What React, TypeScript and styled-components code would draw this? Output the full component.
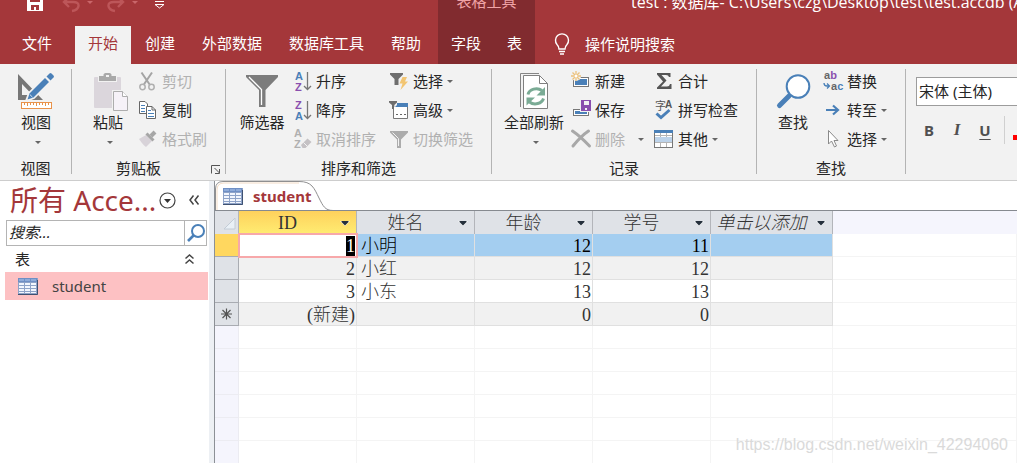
import React from 'react';
import styled, { createGlobalStyle, css } from 'styled-components';

const BLUE = '#4a80b8';
const PURPLE = '#8a4fae';
const FAINT = '#b0b0b0';
const BRAND = '#a4373a';

const uiFont = '"Noto Sans", "Noto Sans CJK SC", sans-serif';
const sheetFont = '"Liberation Serif", "Noto Sans CJK SC", serif';

const GlobalStyle = createGlobalStyle`
  *, *::before, *::after { box-sizing: border-box; }
  body { margin: 0; font: 15px/20px ${uiFont}; color: #262626; background: #fff; }
  button, input, select { font: inherit; color: inherit; margin: 0; padding: 0; border: 0; background: none; }
  svg { display: block; flex: none; overflow: visible; }
  h1, h2 { margin: 0; font: inherit; }
`;

const Window = styled.div`
  display: flex;
  flex-direction: column;
  height: 100vh;
  overflow: hidden;
`;

/* ---------- title bar and tabs ---------- */

const TitleBar = styled.header`
  display: flex;
  height: 26px;
  flex: none;
  overflow: hidden;
  background: ${BRAND};
  color: #fff;
  white-space: nowrap;
`;

const QuickAccess = styled.div`
  display: flex;
  align-items: flex-start;
  width: 438px;
  flex: none;
  padding-left: 26px;
`;

const QuickButton = styled.button<{ $gap?: number }>`
  display: flex;
  margin-right: ${(p) => p.$gap ?? 0}px;
`;

const ContextTitle = styled.div`
  width: 97px;
  flex: none;
  background: #812b2f;
  color: #f0a3a6;
  text-align: center;
  line-height: 2px;
`;

const WindowTitle = styled.h1`
  margin-left: 96px;
  font: 16px/4px "Open Sans", "Noto Sans CJK SC", sans-serif;
`;

const TabBar = styled.nav`
  display: flex;
  height: 38px;
  flex: none;
  background: ${BRAND};
  color: #fff;
  white-space: nowrap;
`;

const MainTabs = styled.div`
  display: flex;
  gap: 1px;
  width: 438px;
  flex: none;
`;

const Tab = styled.button<{ $active?: boolean; $file?: boolean }>`
  padding: 0 13px 4px;
  ${(p) => p.$file && css`width: 74px; padding: 0 0 4px;`}
  ${(p) => p.$active && css`background: #f2f2f2; color: ${BRAND};`}
`;

const ContextTabs = styled.div`
  display: flex;
  width: 97px;
  flex: none;
  background: #812b2f;
`;

const TellMe = styled.button`
  display: flex;
  align-items: center;
  gap: 15px;
  padding: 0 19px 2px;
`;

/* ---------- ribbon ---------- */

const Ribbon = styled.div`
  display: flex;
  height: 117px;
  flex: none;
  background: #f2f2f2;
  border-bottom: 1px solid #cdcdcd;
  white-space: nowrap;
  overflow: hidden;
`;

const Group = styled.section<{ $width?: number }>`
  display: flex;
  flex-direction: column;
  padding-top: 2px;
  ${(p) => (p.$width ? css`width: ${p.$width}px; flex: none;` : css`flex: 1;`)}
`;

const Divider = styled.div`
  width: 1px;
  flex: none;
  margin: 5px 0 6px;
  background: #b4b4b4;
`;

const GroupBody = styled.div<{ $indent: number }>`
  display: flex;
  align-items: flex-start;
  height: 88px;
  flex: none;
  padding-left: ${(p) => p.$indent}px;
`;

const GroupLabel = styled.h2<{ $end?: boolean }>`
  display: flex;
  justify-content: ${(p) => (p.$end ? 'flex-end' : 'center')};
  padding: 4px ${(p) => (p.$end ? 4 : 0)}px 0 0;
  line-height: 20px;
`;

const Launcher = styled.button`
  align-self: center;
  margin: 2px 0 0 50px;
`;

const BigButton = styled.button<{ $width: number }>`
  display: flex;
  flex-direction: column;
  align-items: center;
  width: ${(p) => p.$width}px;
  flex: none;
  padding-top: 4px;
  line-height: 20px;
`;

const BigCaret = styled.span`
  margin: 9px 0 0 4px;
`;

const Column = styled.div<{ $gap: number }>`
  display: flex;
  flex-direction: column;
  align-items: flex-start;
  margin-left: ${(p) => p.$gap}px;
`;

const SmallButton = styled.button<{ $off?: boolean }>`
  display: flex;
  align-items: center;
  gap: 4px;
  height: 29px;
  ${(p) => p.$off && css`color: #b1b1b1;`}
`;

const CaretSlot = styled.span<{ $far?: boolean }>`
  margin: 2px 0 0 ${(p) => (p.$far ? 9 : 0)}px;
`;

const FontGroup = styled(Group)`
  padding: 13px 0 0 10px;
  min-width: 0;
`;

const FontSelect = styled.select`
  appearance: none;
  height: 29px;
  padding: 0 0 2px 2px;
  border: 1px solid #9c9c9c;
  border-right: 0;
  border-radius: 0;
  background: #fff;
`;

const FormatRow = styled.div`
  display: flex;
  align-items: center;
  height: 28px;
  margin-top: 10px;
`;

const FormatButton = styled.button<{ $kind: 'b' | 'i' | 'u' }>`
  width: 28px;
  flex: none;
  padding-right: 2px;
  color: #505050;
  font-weight: 700;
  ${(p) => p.$kind === 'i' && css`font-family: "Liberation Serif", serif; font-size: 17px; font-style: italic;`}
  ${(p) => p.$kind === 'u' && css`text-decoration: underline; text-underline-offset: 3px;`}
`;

const FormatDivider = styled.div`
  width: 1px;
  height: 28px;
  margin: 0 8px 0 4px;
  flex: none;
  background: #d0d0d0;
`;

const FontColor = styled.button`
  width: 16px;
  height: 5px;
  margin-top: 14px;
  flex: none;
  background: #f00;
`;

/* ---------- navigation pane ---------- */

const Workspace = styled.div`
  display: flex;
  flex: 1;
  min-height: 0;
`;

const NavPane = styled.aside`
  width: 209px;
  flex: none;
  padding: 0 1px 0 5px;
`;

const NavHeader = styled.div`
  display: flex;
  align-items: center;
  height: 38px;
  padding: 0 9px 0 5px;
`;

const NavTitle = styled.h2`
  flex: 1;
  color: ${BRAND};
  font-size: 28px;
  line-height: 36px;
  white-space: nowrap;
`;

const NavCollapse = styled.button`
  margin: 0 0 0 13px;
`;

const SearchBox = styled.form`
  display: flex;
  height: 26px;
  margin: 1px 1px 0;
  border: 1px solid #b4b4b4;
`;

const SearchInput = styled.input`
  flex: 1;
  min-width: 0;
  padding: 0 0 2px 2px;
  font-style: italic;
  &::placeholder { color: #262626; opacity: 1; }
`;

const SearchButton = styled.button`
  display: flex;
  align-items: center;
  justify-content: center;
  width: 22px;
  border-left: 1px solid #b4b4b4;
`;

const NavSection = styled.button`
  display: flex;
  align-items: center;
  justify-content: space-between;
  width: 100%;
  height: 26px;
  padding: 0 14px 0 10px;
`;

const NavItem = styled.a`
  display: flex;
  align-items: center;
  gap: 14px;
  height: 28px;
  padding-left: 13px;
  background: #fdc1c3;
  color: #444;
  text-decoration: none;
`;

const Splitter = styled.div`
  width: 6px;
  flex: none;
  background: #edf0f4;
  border-right: 1px solid #8c9096;
`;

/* ---------- datasheet ---------- */

const Document = styled.main`
  position: relative;
  display: flex;
  flex-direction: column;
  flex: 1;
  min-width: 0;
  overflow: hidden;
`;

const DocTabs = styled.div`
  height: 30px;
  flex: none;
  border-bottom: 1px solid #868a90;
`;

const DocTab = styled.button`
  position: relative;
  display: flex;
  align-items: center;
  gap: 10px;
  width: 118px;
  height: 30px;
  padding-left: 8px;
  color: ${BRAND};
  font-weight: 700;
`;

const TabShape = styled.svg`
  position: absolute;
  inset: 0;
  z-index: -1;
`;

const Sheet = styled.table`
  width: 100%;
  table-layout: fixed;
  border-collapse: separate;
  border-spacing: 0;
  font: 18px/20px ${sheetFont};
  color: #333;
`;

const HeadCell = styled.th<{ $tone?: 'active' | 'rest' }>`
  height: 23px;
  padding: 0;
  border-right: 1px solid #b3b5ba;
  background: #dfe2e7;
  font-weight: 300;
  ${(p) => p.$tone === 'active' && css`background: linear-gradient(#fed15c, #ffec72);`}
  ${(p) => p.$tone === 'rest' && css`background: #f5f5fd; border-color: #f5f5fd;`}
`;

const HeadInner = styled.div<{ $italic?: boolean }>`
  display: flex;
  align-items: center;
  justify-content: center;
  padding: 0 6px 0 0;
  font-style: ${(p) => (p.$italic ? 'italic' : 'normal')};
`;

const HeadText = styled.span`
  flex: 1;
  padding-right: 4px;
  text-align: center;
  white-space: nowrap;
`;

const HeadButton = styled.button`
  padding-top: 2px;
`;

const RowHead = styled.th<{ $tone?: 'active' | 'empty' }>`
  height: 23px;
  padding: 0 0 0 5px;
  border-right: 1px solid #a9acb2;
  border-bottom: 1px solid #a9acb2;
  background: #dfe2e7;
  ${(p) => p.$tone === 'active' && css`background: #ffd75f;`}
  ${(p) => p.$tone === 'empty' && css`background: #f5f5fd; border-color: #ececf2;`}
`;

const Cell = styled.td<{ $tone?: 'selected' | 'alt' | 'empty'; $left?: boolean }>`
  height: 23px;
  padding: 2px 1px 0 4px;
  border-right: 1px solid #e0e0e0;
  border-bottom: 1px solid #e0e0e0;
  font-weight: 300;
  text-align: ${(p) => (p.$left ? 'left' : 'right')};
  ${(p) => p.$tone === 'alt' && css`background: #f1f1f1;`}
  ${(p) => p.$tone === 'selected' && css`background: #a4cef0; color: #000;`}
  ${(p) => p.$tone === 'empty' && css`border-color: #f4f4f4;`}
`;

const EditCell = styled(Cell)`
  outline: 2px solid #f7a8aa;
  outline-offset: -1px;
`;

const Selection = styled.span`
  display: block;
  width: 9px;
  margin-left: auto;
  background: #000;
  color: #fff;
`;

const Watermark = styled.div`
  position: absolute;
  right: 9px;
  bottom: 8px;
  font: 16px/20px "Liberation Sans", sans-serif;
  color: #dadada;
`;

/* ---------- icons ---------- */

const Caret = ({ color = '#666' }: { color?: string }) => (
  <svg width="6" height="3" viewBox="0 0 6 3"><path d="M0 0H6L3 3Z" fill={color} /></svg>
);

const Small = ({ children }: { children: React.ReactNode }) => (
  <svg width="20" height="20" viewBox="0 0 20 20" fill="none">{children}</svg>
);

const Big = ({ children }: { children: React.ReactNode }) => (
  <svg width="40" height="42" viewBox="0 0 40 42" fill="none">{children}</svg>
);

const ViewIcon = () => (
  <Big>
    <path d="M2 4V30H27ZM6 14V25H16.500Z" fill="#777" fillRule="evenodd" />
    <path d="M10 31L13 23L31 5L36 10L18 28Z" fill="#f2f2f2" stroke="#f2f2f2" strokeWidth="2" />
    <path d="M11.500 29.500L13.500 23.500L29 8L33 12L17.500 27.500Z" fill={BLUE} />
    <path d="M30.500 6.500L33.500 3.500Q34.500 2.500 35.500 3.500L37.500 5.500Q38.500 6.500 37.500 7.500L34.500 10.500Z" fill={BLUE} />
    <path d="M13.800 24.500L16.500 27.200" stroke="#d8e6f4" />
    <rect x="5.500" y="32.500" width="30" height="6" fill="#fff" stroke="#e8924a" />
    <path d="M8.500 33v2M11.500 33v3M14.500 33v2M17.500 33v2M20.500 33v3M23.500 33v2M26.500 33v2M29.500 33v3M32.500 33v2" stroke="#e8924a" />
  </Big>
);

const PasteIcon = () => (
  <Big>
    <rect x="6" y="7" width="27" height="31" rx="1" fill="#dbd6dc" />
    <path d="M10 12V5H15Q16 2 19.500 2T24 5H29V12Z" fill="#f2f2f2" />
    <path d="M11 11V6H15.500V4.500Q16 3 17.500 3H21.500Q23 3 23.500 4.500V6H28V11Z" fill="#a9a9a9" />
    <rect x="18" y="5" width="3" height="2" fill="#f2f2f2" />
    <path d="M24 20H36L41 26V42H24Z" fill="#f2f2f2" />
    <path d="M25.500 21.500H34.500L39.500 26.500V40.500H25.500Z" fill="#f6f2f8" stroke="#adadad" />
    <path d="M34.500 21.500V26.500H39.500" fill="#fff" stroke="#adadad" />
  </Big>
);

const FilterIcon = () => (
  <Big>
    <path d="M4 5H36V7L23.500 20V37H17V20L4 7Z" fill="#7c7c7c" />
    <path d="M7 7L19.500 19.500V35" stroke="#fff" strokeWidth="1.300" />
  </Big>
);

const RefreshIcon = () => (
  <Big>
    <path d="M6.500 37V3.500H25" stroke="#858585" />
    <path d="M9.500 5.500H25.500L33.500 13.500V38.500H9.500Z" fill="#fff" stroke="#808080" />
    <path d="M25.500 5.500V13.500H33.500" stroke="#808080" />
    <path d="M14 24.500A8.500 7 0 0 1 28 20.500M29.500 28.500A8.500 7 0 0 1 15.500 32" stroke="#7aab95" strokeWidth="3" />
    <path d="M31 17V25.500H22.500ZM12.500 35.500V27.500H21Z" fill="#7aab95" />
  </Big>
);

const FindIcon = () => (
  <Big>
    <path d="M16 26L6.500 35.500" stroke={BLUE} strokeWidth="5" strokeLinecap="round" />
    <circle cx="25" cy="16.500" r="11.300" fill="#fff" stroke={BLUE} strokeWidth="2" />
  </Big>
);

const CutIcon = () => (
  <Small>
    <path d="M3.500 1.500L12 14M14 1.500L5.500 14" stroke="#a4a4a4" strokeWidth="2" />
    <circle cx="4.500" cy="16" r="2.700" stroke={FAINT} strokeWidth="1.500" />
    <circle cx="13.500" cy="16" r="2.700" stroke={FAINT} strokeWidth="1.500" />
  </Small>
);

const CopyIcon = () => (
  <Small>
    <path d="M1.500 1.500H7L9.500 4V13.500H1.500Z" fill="#fff" stroke="#666" />
    <path d="M3 5.500h4M3 8.500h4M3 11.500h4" stroke={BLUE} />
    <path d="M8.500 6.500H14L17.500 10V18.500H8.500Z" fill="#fff" stroke="#666" />
    <path d="M14 6.500V10H17.500" stroke="#666" />
    <path d="M10 10.500h3M10 13.500h6M10 16.500h6" stroke={BLUE} />
  </Small>
);

const BrushIcon = () => (
  <Small>
    <path d="M1 10L8 6L14 12L8 18Q5 16 1 10Z" fill="#d8d3d9" />
    <path d="M8.500 4.500L15.500 11.500" stroke="#a6a6a6" strokeWidth="3" />
    <path d="M13 7L17 3" stroke="#a6a6a6" strokeWidth="4" />
  </Small>
);

const LetterText = styled.text`
  font: 700 11px "Liberation Sans", sans-serif;
`;

const SortIcon = ({ top, bottom, a, b }: { top: string; bottom: string; a: string; b: string }) => (
  <Small>
    <LetterText x="3" y="9" fill={a}>{top}</LetterText>
    <LetterText x="3" y="20" fill={b}>{bottom}</LetterText>
    <path d="M15.500 1V18.500M12 15L15.500 18.500L19 15" stroke="#777" strokeWidth="1.300" />
  </Small>
);

const ClearSortIcon = () => (
  <Small>
    <LetterText x="2" y="8" fill="#b0b0b0">A</LetterText>
    <LetterText x="2" y="19" fill="#b0b0b0">Z</LetterText>
    <path d="M9 16L15.500 9.500L19.500 13L13.500 19H10.500Z" fill="#c4c1c4" />
    <path d="M11.500 13.500L15.500 17.500" stroke="#f2f2f2" />
  </Small>
);

const SelectionIcon = () => (
  <Small>
    <path d="M1 2H14V3.500L9.500 8V14H5.500V8L1 3.500Z" fill="#6e6e6e" />
    <path d="M13.500 6H18L16 10.500H19L11.500 19L13.500 12.500H10.500Z" fill="#f2c572" />
  </Small>
);

const AdvancedIcon = () => (
  <Small>
    <path d="M0 1H8V2.500L5.300 5V9H3V5L0 2.500Z" fill="#6e6e6e" />
    <path d="M4.500 9V18.500H18.500V6" fill="#fff" stroke="#777" />
    <path d="M8 3H19V7H6L8 5Z" fill={BLUE} />
    <rect x="5" y="7" width="13" height="11" fill="#fff" />
    <path d="M7 14.500h2M11 14.500h2M15 14.500h2" stroke="#666" />
  </Small>
);

const ToggleFilterIcon = () => (
  <Small>
    <path d="M1 2H19V3.500L12 10.500V19H8V10.500L1 3.500Z" fill="#acacac" />
    <path d="M3.500 3.500L9.500 9.500V17" stroke="#f2f2f2" />
  </Small>
);

const NewIcon = () => (
  <Small>
    <rect x="2.500" y="6.500" width="15" height="9" fill="#fff" stroke="#777" />
    <rect x="4" y="8" width="12" height="6" fill={BLUE} />
    <circle cx="5" cy="5" r="5" fill="#f2f2f2" />
    <path d="M5 0V10M0 5H10M1.500 1.500L8.500 8.500M8.500 1.500L1.500 8.500" stroke="#ecc17c" strokeWidth="1.300" />
    <circle cx="5" cy="5" r="1.500" fill="#fff" />
  </Small>
);

const SaveIcon = () => (
  <Small>
    <rect x="2.500" y="9.500" width="15" height="6" fill="#fff" stroke="#777" />
    <rect x="4" y="11" width="12" height="3" fill={BLUE} />
    <rect x="9" y="-1" width="12" height="13" fill="#f2f2f2" />
    <rect x="10" y="0" width="10" height="11" fill={PURPLE} />
    <rect x="13" y="1" width="5" height="4" fill="#f2f2f2" />
    <rect x="14" y="8" width="2" height="2" fill="#f2f2f2" />
  </Small>
);

const DeleteIcon = () => (
  <Small>
    <path d="M1.500 2Q9 7 18.500 17M17.500 2Q10 7 2 17" stroke="#a8a8a8" strokeWidth="3" strokeLinecap="round" />
  </Small>
);

const SumIcon = () => (
  <Small>
    <path d="M3 2H16.500V6H15Q14.500 4 12 4H7.500L12.500 9.500L7 15.500H13Q15.500 15.500 16 13H17.500V18H3V16.500L9 10.500L3 3.500Z" fill="#555" />
  </Small>
);

const SpellIcon = () => (
  <Small>
    <text x="1" y="10" fontSize="11" fontFamily='"Noto Sans CJK SC", sans-serif' fill="#555">字</text>
    <text x="11" y="8" fontSize="10" fontWeight="700" fontFamily='"Liberation Sans", sans-serif' fill="#555">A</text>
    <path d="M2.500 13.500L7 17.500L15.500 10" stroke={BLUE} strokeWidth="3" />
  </Small>
);

const MoreIcon = () => (
  <Small>
    <rect x="0.500" y="1.500" width="18" height="17" fill="#fff" stroke="#777" />
    <path d="M1 6.500H18M1 13.500H18M6.500 4V18M12.500 4V18" stroke="#b4b4b4" />
    <rect x="0" y="1" width="19" height="3" fill={BLUE} />
    <rect x="1" y="8" width="17" height="5" fill="#bdd3ea" />
  </Small>
);

const ReplaceText = styled.text`
  font: 600 11px "Liberation Sans", sans-serif;
`;

const ReplaceIcon = () => (
  <Small>
    <ReplaceText x="1" y="8" fill="#666">a<tspan fill={PURPLE}>b</tspan></ReplaceText>
    <ReplaceText x="8" y="19" fill="#666">a<tspan fill={BLUE}>c</tspan></ReplaceText>
    <path d="M1 12Q1 15 4 15H6M4 12.500L6.500 15L4 17.500" stroke={BLUE} strokeWidth="1.300" />
  </Small>
);

const GoIcon = () => (
  <Small>
    <path d="M3 10H15M10 5.500L15 10L10 14.500" stroke={BLUE} strokeWidth="2.200" />
  </Small>
);

const PointerIcon = () => (
  <Small>
    <path d="M5.500 1.500V15L8.500 12L11.500 18L13.500 17L11 11.500H15Z" fill="#fff" stroke="#8a8a8a" />
  </Small>
);

const TableIcon = () => (
  <svg width="20" height="17" viewBox="0 0 20 17">
    <rect width="20" height="17" fill="#8ea3c8" />
    <rect x="0" y="0" width="19" height="4" fill="#6f8fc4" />
    <path d="M1 5h5v2H1zM7 5h5v2H7zM13 5h5v2h-5zM1 8h5v2H1zM7 8h5v2H7zM13 8h5v2h-5zM1 11h5v2H1zM7 11h5v2H7zM13 11h5v2h-5zM1 14h5v1H1zM7 14h5v1H7zM13 14h5v1h-5z" fill="#f2f6fd" />
    <path d="M1 1h5v2H1zM7 1h5v2H7zM13 1h5v2h-5z" fill="#8eabd9" />
    <path d="M0 16.500H19.500V2" stroke="#3f5272" fill="none" />
  </svg>
);

const HeadArrow = () => (
  <svg width="10" height="5" viewBox="0 0 10 5">
    <path d="M0 0H10L5 5Z" fill="#fff" />
    <path d="M1.500 0H8.500V1L5 4.500L1.500 1Z" fill="#25303c" />
  </svg>
);

/* ---------- data ---------- */

type Action = { text: string; icon: React.ReactNode; off?: boolean; caret?: 'near' | 'far' };

const clipboard: Action[] = [
  { text: '剪切', icon: <CutIcon />, off: true },
  { text: '复制', icon: <CopyIcon /> },
  { text: '格式刷', icon: <BrushIcon />, off: true },
];
const sorting: Action[] = [
  { text: '升序', icon: <SortIcon top="A" bottom="Z" a={BLUE} b={PURPLE} /> },
  { text: '降序', icon: <SortIcon top="Z" bottom="A" a={PURPLE} b={BLUE} /> },
  { text: '取消排序', icon: <ClearSortIcon />, off: true },
];
const filtering: Action[] = [
  { text: '选择', icon: <SelectionIcon />, caret: 'near' },
  { text: '高级', icon: <AdvancedIcon />, caret: 'near' },
  { text: '切换筛选', icon: <ToggleFilterIcon />, off: true },
];
const editing: Action[] = [
  { text: '新建', icon: <NewIcon /> },
  { text: '保存', icon: <SaveIcon /> },
  { text: '删除', icon: <DeleteIcon />, off: true, caret: 'far' },
];
const records: Action[] = [
  { text: '合计', icon: <SumIcon /> },
  { text: '拼写检查', icon: <SpellIcon /> },
  { text: '其他', icon: <MoreIcon />, caret: 'near' },
];
const finding: Action[] = [
  { text: '替换', icon: <ReplaceIcon /> },
  { text: '转至', icon: <GoIcon />, caret: 'near' },
  { text: '选择', icon: <PointerIcon />, caret: 'near' },
];

const columns = ['ID', '姓名', '年龄', '学号'];
const rows = [
  ['2', '小红', '12', '12'],
  ['3', '小东', '13', '13'],
  ['(新建)', '', '0', '0'],
];
const blankRows = [0, 1, 2, 3, 4, 5];

const Actions = ({ items, gap }: { items: Action[]; gap: number }) => (
  <Column $gap={gap}>
    {items.map((a) => (
      <SmallButton key={a.text} $off={a.off} type="button">
        {a.icon}
        <span>{a.text}</span>
        {a.caret && <CaretSlot $far={a.caret === 'far'}><Caret /></CaretSlot>}
      </SmallButton>
    ))}
  </Column>
);

const BigAction = ({ icon, text, width, caret }: { icon: React.ReactNode; text: string; width: number; caret?: boolean }) => (
  <BigButton $width={width} type="button">
    {icon}
    <span>{text}</span>
    {caret && <BigCaret><Caret /></BigCaret>}
  </BigButton>
);

export default function App() {
  return (
    <Window>
      <GlobalStyle />
      <TitleBar>
        <QuickAccess>
          <QuickButton aria-label="保存" $gap={19}>
            <svg width="18" height="12" viewBox="0 0 18 12"><path d="M1 0H17V11H1Z" fill="#fff" /><path d="M4 0H14V2H4ZM5 5H13V10H10V7H8V10H5Z" fill={BRAND} /></svg>
          </QuickButton>
          <QuickButton aria-label="撤消" $gap={6}>
            <svg width="18" height="12" viewBox="0 0 18 12" fill="none"><path d="M1 2H10Q16 2 15.500 6T9 11M6 -3L1 2L6 7" stroke="#bd5659" strokeWidth="2.400" /></svg>
          </QuickButton>
          <QuickButton aria-label="撤消选项" $gap={13}><svg width="6" height="5" viewBox="0 0 6 5"><path d="M0 1H6L3 4Z" fill="#c9676a" /></svg></QuickButton>
          <QuickButton aria-label="恢复" $gap={8}>
            <svg width="18" height="12" viewBox="0 0 18 12" fill="none"><path d="M17 2H8Q2 2 2.500 6T9 11M12 -3L17 2L12 7" stroke="#bd5659" strokeWidth="2.400" /></svg>
          </QuickButton>
          <QuickButton aria-label="恢复选项" $gap={16}><svg width="6" height="5" viewBox="0 0 6 5"><path d="M0 1H6L3 4Z" fill="#c9676a" /></svg></QuickButton>
          <QuickButton aria-label="自定义快速访问工具栏">
            <svg width="11" height="9" viewBox="0 0 11 9" fill="none"><path d="M1 1.500H10M1 4.500H10L5.500 8Z" stroke="#fff" /></svg>
          </QuickButton>
        </QuickAccess>
        <ContextTitle>表格工具</ContextTitle>
        <WindowTitle>test : 数据库- C:\Users\czg\Desktop\test\test.accdb (A</WindowTitle>
      </TitleBar>
      <TabBar>
        <MainTabs>
          <Tab $file>文件</Tab>
          <Tab $active>开始</Tab>
          <Tab>创建</Tab>
          <Tab>外部数据</Tab>
          <Tab>数据库工具</Tab>
          <Tab>帮助</Tab>
        </MainTabs>
        <ContextTabs>
          <Tab>字段</Tab>
          <Tab>表</Tab>
        </ContextTabs>
        <TellMe>
          <svg width="16" height="21" viewBox="0 0 16 21" fill="none" stroke="#fff" strokeWidth="1.400">
            <path d="M5 15Q5 12.500 3 10.500A6.500 6.500 0 1 1 13 10.500Q11 12.500 11 15ZM5 17.500H11M6 20H10" />
          </svg>
          <span>操作说明搜索</span>
        </TellMe>
      </TabBar>

      <Ribbon>
        <Group $width={71}>
          <GroupBody $indent={14}><BigAction icon={<ViewIcon />} text="视图" width={44} caret /></GroupBody>
          <GroupLabel>视图</GroupLabel>
        </Group>
        <Divider />
        <Group $width={153}>
          <GroupBody $indent={14}>
            <BigAction icon={<PasteIcon />} text="粘贴" width={44} caret />
            <Actions items={clipboard} gap={8} />
          </GroupBody>
          <GroupLabel $end>
            <span>剪贴板</span>
            <Launcher aria-label="剪贴板选项">
              <svg width="10" height="9" viewBox="0 0 10 9" fill="none" stroke="#555"><path d="M0.500 8.500V0.500H9M3.500 3L8.500 8M8.500 4V8.500H4" /></svg>
            </Launcher>
          </GroupLabel>
        </Group>
        <Divider />
        <Group $width={265}>
          <GroupBody $indent={10}>
            <BigAction icon={<FilterIcon />} text="筛选器" width={52} />
            <Actions items={sorting} gap={4} />
            <Actions items={filtering} gap={13} />
          </GroupBody>
          <GroupLabel>排序和筛选</GroupLabel>
        </Group>
        <Divider />
        <Group $width={264}>
          <GroupBody $indent={10}>
            <BigAction icon={<RefreshIcon />} text="全部刷新" width={64} caret />
            <Actions items={editing} gap={5} />
            <Actions items={records} gap={10} />
          </GroupBody>
          <GroupLabel>记录</GroupLabel>
        </Group>
        <Divider />
        <Group $width={148}>
          <GroupBody $indent={14}>
            <BigAction icon={<FindIcon />} text="查找" width={44} />
            <Actions items={finding} gap={8} />
          </GroupBody>
          <GroupLabel>查找</GroupLabel>
        </Group>
        <Divider />
        <FontGroup>
          <FontSelect aria-label="字体"><option>宋体 (主体)</option></FontSelect>
          <FormatRow>
            <FormatButton $kind="b">B</FormatButton>
            <FormatButton $kind="i">I</FormatButton>
            <FormatButton $kind="u">U</FormatButton>
            <FormatDivider />
            <FontColor aria-label="字体颜色" />
          </FormatRow>
        </FontGroup>
      </Ribbon>

      <Workspace>
        <NavPane>
          <NavHeader>
            <NavTitle>所有 Acce...</NavTitle>
            <button aria-label="选择类别">
              <svg width="17" height="17" viewBox="0 0 17 17" fill="none"><circle cx="8.500" cy="8.500" r="7.500" stroke="#444" strokeWidth="1.200" /><path d="M5 7H12L8.500 11Z" fill="#333" /></svg>
            </button>
            <NavCollapse aria-label="折叠导航窗格">
              <svg width="10" height="10" viewBox="0 0 10 10" fill="none" stroke="#444" strokeWidth="1.500"><path d="M4.500 0.500L1 5L4.500 9.500M9.500 0.500L6 5L9.500 9.500" /></svg>
            </NavCollapse>
          </NavHeader>
          <SearchBox>
            <SearchInput aria-label="搜索" placeholder="搜索..." />
            <SearchButton type="button" aria-label="开始搜索">
              <svg width="18" height="18" viewBox="0 0 18 18" fill="none" stroke={BLUE}><circle cx="11" cy="7" r="6" strokeWidth="2" /><path d="M7 11L1 17" strokeWidth="2.600" /></svg>
            </SearchButton>
          </SearchBox>
          <NavSection>
            <span>表</span>
            <svg width="9" height="10" viewBox="0 0 9 10" fill="none" stroke="#444" strokeWidth="1.500"><path d="M0.500 4.500L4.500 1L8.500 4.500M0.500 9.500L4.500 6L8.500 9.500" /></svg>
          </NavSection>
          <NavItem href="#student"><TableIcon />student</NavItem>
        </NavPane>
        <Splitter />
        <Document>
          <DocTabs>
            <DocTab>
              <TabShape width="118" height="30" viewBox="0 0 118 30" fill="#fff">
                <path d="M0.500 30V8Q0.500 0.500 8 0.500H84C97 0.500 99 7 104 17C108 25 110 29.500 118 29.500" stroke="#8f8f90" />
                <path d="M2 29V9Q2 2 9 2H84" stroke="#f3dcc6" fill="none" />
              </TabShape>
              <TableIcon />
              student
            </DocTab>
          </DocTabs>
          <Sheet>
            <colgroup>
              <col style={{ width: 24 }} />
              {columns.map((c) => <col key={c} style={{ width: 118 }} />)}
              <col style={{ width: 122 }} />
              <col />
            </colgroup>
            <thead>
              <tr>
                <HeadCell aria-label="全选">
                  <svg width="22" height="16" viewBox="0 0 22 16"><path d="M20 3V14H9Z" fill="#e9f0f6" stroke="#c3ccd6" /></svg>
                </HeadCell>
                {columns.map((c) => (
                  <HeadCell key={c} $tone={c === 'ID' ? 'active' : undefined}>
                    <HeadInner><HeadText>{c}</HeadText><HeadButton aria-label={`${c} 筛选`}><HeadArrow /></HeadButton></HeadInner>
                  </HeadCell>
                ))}
                <HeadCell>
                  <HeadInner $italic><HeadText>单击以添加</HeadText><HeadButton aria-label="添加字段"><HeadArrow /></HeadButton></HeadInner>
                </HeadCell>
                <HeadCell $tone="rest" />
              </tr>
            </thead>
            <tbody>
              <tr>
                <RowHead $tone="active" />
                <EditCell><Selection>1</Selection></EditCell>
                <Cell $tone="selected" $left>小明</Cell>
                <Cell $tone="selected">12</Cell>
                <Cell $tone="selected">11</Cell>
                <Cell $tone="selected" />
                <Cell $tone="empty" />
              </tr>
              {rows.map((r, i) => (
                <tr key={r[0]}>
                  <RowHead>
                    {i === 2 && (
                      <svg width="13" height="12" viewBox="0 0 13 12" stroke="#555" strokeWidth="1.200"><path d="M6.500 0.500V11.500M1 6H12M2.500 2L10.500 10M10.500 2L2.500 10" /></svg>
                    )}
                  </RowHead>
                  {r.map((v, j) => (
                    <Cell key={j} $tone={i % 2 === 0 ? 'alt' : undefined} $left={j === 1}>{v}</Cell>
                  ))}
                  <Cell $tone={i % 2 === 0 ? 'alt' : undefined} />
                  <Cell $tone="empty" />
                </tr>
              ))}
              {blankRows.map((b) => (
                <tr key={b}>
                  <RowHead $tone="empty" />
                  {[0, 1, 2, 3, 4, 5].map((c) => <Cell key={c} $tone="empty" />)}
                </tr>
              ))}
            </tbody>
          </Sheet>
          <Watermark>https://blog.csdn.net/weixin_42294060</Watermark>
        </Document>
      </Workspace>
    </Window>
  );
}
